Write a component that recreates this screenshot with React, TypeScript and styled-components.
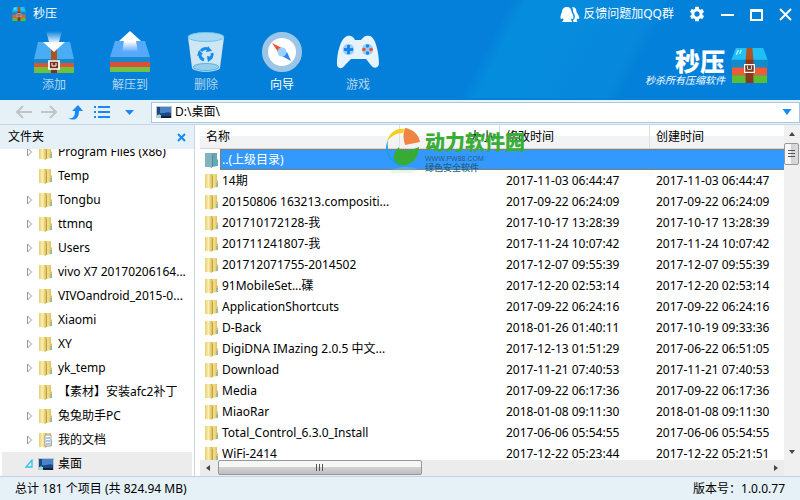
import React from "react";
import styled, { createGlobalStyle, css } from "styled-components";
import { MdSettings } from "react-icons/md";

const GlobalStyle = createGlobalStyle`
  * { box-sizing: border-box; }
  html, body, #root { height: 100%; margin: 0; }
  body {
    overflow: hidden;
    color: #000;
    font: 12px/16px "Noto Sans", "Noto Sans CJK SC", sans-serif;
  }
  button, input { font: inherit; color: inherit; }
  svg { display: block; flex: none; }
`;

const bare = css`
  border: 0;
  padding: 0;
  background: none;
`;

const Window = styled.main`
  display: flex;
  flex-direction: column;
  height: 100vh;
  background: #fff;
`;

const Banner = styled.header`
  display: flex;
  flex-direction: column;
  flex: none;
  color: #fff;
  background: linear-gradient(118deg, #0480da 0 60%, #058ddd 62%, #0788dc 77%, #0380d9 79%);
`;

const TitleBar = styled.div`
  display: flex;
  align-items: center;
  flex: none;
  height: 28px;
  padding: 0 7px 0 12px;
`;

const AppName = styled.h1`
  flex: 1;
  margin: 0 0 0 7px;
  font-size: 12px;
  font-weight: 400;
`;

const Feedback = styled.a`
  display: flex;
  align-items: center;
  gap: 3px;
  margin-right: 14px;
  color: #fff;
  text-decoration: none;
`;

const TitleButtons = styled.div`
  display: flex;
  align-items: center;
  gap: 14px;
`;

const IconButton = styled.button`
  ${bare}
  display: flex;
  align-items: center;
  justify-content: center;
  color: inherit;
`;

const Actions = styled.div`
  display: flex;
  height: 70px;
  justify-content: space-between;
  padding: 0 32px 0 16px;
`;

const ActionGroup = styled.nav`
  display: flex;
`;

const Action = styled.button<{ $active?: boolean }>`
  ${bare}
  display: flex;
  flex-direction: column;
  align-items: center;
  width: 76px;
  height: 66px;
  gap: 1px;
  color: ${(p) => (p.$active ? "#fff" : "#b5d5ee")};
`;

const Brand = styled.div`
  display: flex;
  align-items: center;
  gap: 6px;
  padding-top: 5px;
`;

const BrandText = styled.div`
  display: flex;
  flex-direction: column;
  align-items: flex-end;
`;

const BrandName = styled.strong`
  font: 900 25px/28px "Noto Sans CJK SC", sans-serif;
`;

const Slogan = styled.em`
  font: italic 10px/12px "Noto Sans CJK SC", sans-serif;
`;

const Toolbar = styled.div`
  display: flex;
  align-items: center;
  flex: none;
  height: 27px;
  padding-left: 15px;
  border-top: 2px solid #0380d9;
  border-bottom: 1px solid #c8d6ea;
  background: #e5f1f7;
`;

const NavButtons = styled.div`
  display: flex;
  align-items: center;
  gap: 9px;
  width: 136px;
`;

const AddressBar = styled.label`
  display: flex;
  flex: 1;
  align-items: center;
  gap: 3px;
  height: 21px;
  padding: 0 6px 0 4px;
  border: 1px solid #a8c9dd;
  background: #fff;
`;

const Address = styled.input`
  ${bare}
  flex: 1;
  min-width: 0;
  outline: 0;
`;

const Content = styled.div`
  display: flex;
  flex: 1;
  min-height: 0;
`;

const Sidebar = styled.aside`
  display: flex;
  flex-direction: column;
  flex: none;
  width: 195px;
  border-right: 1px solid #ccd5e7;
`;

const SidebarHeader = styled.div`
  display: flex;
  align-items: center;
  justify-content: space-between;
  flex: none;
  height: 24px;
  padding: 0 8px;
  background: #e5f1f7;
`;

const PanelTitle = styled.h2`
  margin: 0;
  font-size: 12px;
  font-weight: 400;
`;

const TreeView = styled.div`
  display: flex;
  flex: 1;
  flex-direction: column;
  justify-content: flex-end;
  min-height: 0;
  overflow: hidden;
  padding: 0 2px;
`;

const Tree = styled.ul`
  margin: 0;
  padding: 0;
  list-style: none;
`;

const TreeRow = styled.li<{ $selected?: boolean }>`
  display: grid;
  grid-template-columns: 14px 20px 1fr;
  align-items: center;
  height: 24px;
  padding-left: 22px;
  white-space: nowrap;
  background: ${(p) => (p.$selected ? "#ececec" : "transparent")};
`;

const ListPane = styled.section`
  display: grid;
  flex: 1;
  grid-template-columns: 1fr 16px;
  grid-template-rows: 1fr 16px;
  min-width: 0;
  padding-left: 5px;
  position: relative;
`;

const TableView = styled.div`
  min-height: 0;
  overflow: hidden;
`;

const Table = styled.table`
  width: 100%;
  table-layout: fixed;
  border-collapse: separate;
  border-spacing: 0;
`;

const Column = styled.col<{ $width?: number }>`
  width: ${(p) => (p.$width ? `${p.$width}px` : "auto")};
`;

const HeadCell = styled.th<{ $end?: boolean }>`
  height: 24px;
  padding: 0 6px;
  border-right: 1px solid #dfe0e4;
  border-bottom: 1px solid #d5d5d5;
  background: linear-gradient(#fff 45%, #f2f3f5 50%);
  font-weight: 400;
  text-align: ${(p) => (p.$end ? "right" : "left")};
  &:last-child { border-right: 0; }
`;

const Cell = styled.td<{ $selected?: boolean }>`
  height: 21px;
  padding: 0 6px;
  white-space: nowrap;
  ${(p) =>
    p.$selected &&
    css`
      background: #3399ff;
      border-top: 1px dotted #cc6600;
      border-bottom: 1px dotted #cc6600;
    `}
`;

const NameCell = styled.td`
  height: 21px;
  padding: 0;
`;

const NameContent = styled.div`
  display: flex;
  align-items: center;
  gap: 2px;
  padding-left: 4px;
`;

const FileName = styled.span<{ $selected?: boolean }>`
  flex: 1;
  height: 21px;
  padding-left: 2px;
  line-height: 21px;
  white-space: nowrap;
  ${(p) =>
    p.$selected &&
    css`
      color: #fff;
      background: #3399ff;
      border: 1px dotted #cc6600;
      border-right: 0;
      padding-left: 1px;
      line-height: 19px;
    `}
`;

const VerticalBar = styled.div`
  display: flex;
  flex-direction: column;
  padding-top: 1px;
  background: #f0f0f0;
`;

const HorizontalBar = styled.div`
  display: flex;
  background: #ececec;
`;

const ScrollArrow = styled(IconButton)<{ $end?: boolean }>`
  flex: none;
  width: 16px;
  height: 16px;
  ${(p) => p.$end && css`margin: auto 0 0 auto;`}
`;

const Thumb = styled.button<{ $vertical?: boolean }>`
  ${bare}
  display: flex;
  align-items: center;
  justify-content: center;
  border: 1px solid #979797;
  border-radius: 2px;
  ${(p) =>
    p.$vertical
      ? css`
          width: 15px;
          height: 22px;
          margin-top: 1px;
          background: linear-gradient(90deg, #f6f6f6 45%, #d2d2d5 50%, #dcdcde);
        `
      : css`
          width: 35%;
          margin: 0 2px;
          height: 15px;
          background: linear-gradient(#f6f6f6 45%, #d2d2d5 50%, #bebec2);
        `}
`;

const Corner = styled.div`
  background: #f0f0f0;
`;

const Watermark = styled.div`
  position: absolute;
  top: 2px;
  left: 190px;
  display: flex;
  gap: 4px;
  pointer-events: none;
`;

const WatermarkText = styled.div`
  display: flex;
  flex-direction: column;
  padding-top: 3px;
  color: #285f80;
`;

const WatermarkName = styled.strong`
  color: #39ad36;
  font: 900 20px/24px "Noto Sans CJK SC", sans-serif;
`;

const WatermarkUrl = styled.span`
  font: 7px/9px "Liberation Sans", sans-serif;
`;

const WatermarkTag = styled.span`
  font: 500 9px/9px "Noto Sans CJK SC", sans-serif;
`;

const StatusBar = styled.footer`
  display: flex;
  align-items: center;
  justify-content: space-between;
  flex: none;
  height: 24px;
  padding: 0 15px;
  border-top: 1px solid #c6cde4;
  background: #e5f1f7;
`;

function Archive({ width, height }: { width: number; height: number }) {
  return (
    <svg width={width} height={height} viewBox="0 0 38 36" preserveAspectRatio="none" aria-hidden="true">
      <path d="M5 0h28l5 13H0z" fill="#1fc0f5" />
      <path d="M0 12h38v8H0z" fill="#118bc9" />
      <path d="M1 20h36v8H1z" fill="#f15a36" />
      <path d="M1 28h36v8H1z" fill="#5cbd31" />
      <path d="M16 0h6l1 13h-8z" fill="#b5521f" />
      <path d="M15 12h8v24h-8z" fill="#87381f" />
      <path d="M14 17h10v8H14z" fill="#713521" stroke="#fff" strokeWidth="1.3" />
      <path d="M17 18v4h4v-4" fill="none" stroke="#e8d8ce" />
      <path d="M7.500 2 5.500 7M10.500 2 9 6" stroke="#b8f2ff" strokeWidth="1.4" />
    </svg>
  );
}

function AddIcon() {
  return (
    <svg width="44" height="48" viewBox="0 0 44 48" aria-hidden="true">
      <defs>
        <linearGradient id="fall" x2="0" y2="1">
          <stop stopColor="#fff" stopOpacity="0" />
          <stop offset=".6" stopColor="#fff" />
        </linearGradient>
      </defs>
      <path d="M6 14h32l4 17H2z" fill="#48adf3" />
      <path d="M2 31h40v5H2z" fill="#118bc9" />
      <path d="M2 35h40v5H2z" fill="#db5437" />
      <path d="M2 39h40v6H2z" fill="#72bf3c" />
      <path d="M19 21h6v24h-6z" fill="#a9551f" />
      <path d="M19 32h6v13h-6z" fill="#7b3521" />
      <path d="M17 33h10v8H17z" fill="#723321" stroke="#fff" strokeWidth="1.7" />
      <path d="M20 35v3h4v-3" fill="none" stroke="#fff" />
      <path d="M14 3h16l-3 11h6L22 24 11 14h6z" fill="url(#fall)" />
    </svg>
  );
}

function ExtractIcon() {
  return (
    <svg width="44" height="48" viewBox="0 0 44 48" aria-hidden="true">
      <defs>
        <linearGradient id="rise" x2="0" y2="1">
          <stop offset=".5" stopColor="#fff" />
          <stop offset="1" stopColor="#fff" stopOpacity="0" />
        </linearGradient>
      </defs>
      <path d="M7 13h30l5 16H2z" fill="#56a8fb" />
      <path d="M2 29h40v6H2z" fill="#1689d1" />
      <path d="M2 34h40v5H2z" fill="#db5035" />
      <path d="M2 39h40v5H2z" fill="#72c247" />
      <path d="M22 3 33 13h-5l2 11H14l2-11h-5z" fill="url(#rise)" />
    </svg>
  );
}

function TrashIcon() {
  return (
    <svg width="44" height="48" viewBox="0 0 44 48" aria-hidden="true">
      <path d="M4 9h36l-4 31c-3 5-25 5-28 0z" fill="#cfe6f5" />
      <ellipse cx="22" cy="39" rx="13" ry="3.500" fill="#94d0ee" stroke="#5fb4e0" />
      <ellipse cx="22" cy="9" rx="18" ry="4.500" fill="#a8daf3" stroke="#72c4eb" />
      <g fill="none" stroke="#158dec" strokeWidth="3">
        <path d="M17 23a6 6 0 0 1 7-2M28 25a6 6 0 0 1-4 7M20 32a6 6 0 0 1-4-6" />
      </g>
      <g fill="#158dec"><path d="m24 18 4 5-6 1zM29 29l-5 5-1-6zM13 28l2-6 4 4z" /></g>
    </svg>
  );
}

function CompassIcon() {
  return (
    <svg width="44" height="48" viewBox="0 0 44 48" aria-hidden="true">
      <circle cx="22" cy="24" r="17" fill="#fff" stroke="#9cc6e8" strokeWidth="6" />
      <path d="m12 15 10 5-4 4z" fill="#f05534" />
      <path d="m31 33-9-5 5-4z" fill="#2985f3" />
      <circle cx="22" cy="24" r="4.500" fill="#98d2fc" />
    </svg>
  );
}

function GameIcon() {
  return (
    <svg width="44" height="48" viewBox="0 0 44 48" aria-hidden="true">
      <path d="M11 8c5-1 7 2 8 4h6c3-4 5-5 9-4 6 2 9 18 9 27 0 6-6 6-9 1l-4-5H15l-5 5c-4 6-9 5-9 0C1 26 4 11 11 8z" fill="#e6f3fc" />
      <circle cx="12.500" cy="21.500" r="5.700" fill="#99cff3" />
      <path d="M12.500 17v9M8 21.500h9" stroke="#1685ef" strokeWidth="3" />
      <circle cx="31.500" cy="21.500" r="5.700" fill="#99cff3" />
      <circle cx="31.500" cy="18" r="1.800" fill="#1685ef" />
      <circle cx="31.500" cy="25" r="1.800" fill="#1685ef" />
      <circle cx="28" cy="21.500" r="1.800" fill="#ee5235" />
      <circle cx="35" cy="21.500" r="1.800" fill="#ee5235" />
    </svg>
  );
}

function Folder({ tint, paper }: { tint?: boolean; paper?: boolean }) {
  return (
    <svg width="14" height="16" viewBox="0 0 14 16" aria-hidden="true">
      <defs>
        <linearGradient id="folderFront">
          <stop stopColor="#e6cd72" />
          <stop offset=".5" stopColor="#faefb0" />
          <stop offset="1" stopColor="#dcbd57" />
        </linearGradient>
        <linearGradient id="folderBack">
          <stop stopColor="#c5a03e" />
          <stop offset=".4" stopColor="#f3e292" />
          <stop offset="1" stopColor="#d9b74e" />
        </linearGradient>
      </defs>
      <path d="M7 1h6v6l1 1v6l-7 1z" fill={tint ? "#6aa6b6" : "url(#folderBack)"} />
      <path d="M1 1h6l1 1v14l-3-1H1z" fill={tint ? "#7fb4bf" : "url(#folderFront)"} />
      <path d="M8.500 3v12" stroke={tint ? "#4f8ba0" : "#c4a244"} />
      <path d="M13 10v4" stroke="#4fb0ee" />
      {paper && <path d="M7 3h6v11H7z" fill="#fff" stroke="#a1a09a" />}
      {paper && <path d="M8 6h4M8 9h4M8 12h4" stroke="#4e91da" />}
    </svg>
  );
}

function Desktop() {
  return (
    <svg width="16" height="14" viewBox="0 0 16 14" aria-hidden="true">
      <path d="M0 1h16v12H0z" fill="#b9c5d2" />
      <path d="M1 2h14v10H1z" fill="#1c4787" />
      <path d="M4 2h11v6C11 6 9 9 4 8z" fill="#4a84c6" />
      <path d="M1 12h14" stroke="#142036" strokeWidth="2" />
      <path d="M1 10h4v3H1z" fill="#7ce1ed" />
      <path d="M3 9v3" stroke="#e7c754" />
    </svg>
  );
}

function Expander({ open }: { open?: boolean }) {
  return (
    <svg width="10" height="10" viewBox="0 0 10 10" aria-hidden="true">
      {open ? (
        <path d="M8 1v7H2z" fill="#dff7ff" stroke="#34c0f2" strokeWidth="1.300" />
      ) : (
        <path d="m3.500 1 4 4-4 4z" fill="#fff" stroke="#9a9a9a" />
      )}
    </svg>
  );
}

function Triangle({ turn = 0, color = "#444", size = 8 }: { turn?: number; color?: string; size?: number }) {
  return (
    <svg width={size} height={size} viewBox="0 0 8 8" aria-hidden="true">
      <path d="M1 2h6L4 6z" fill={color} transform={`rotate(${turn} 4 4)`} />
    </svg>
  );
}

function Grip({ vertical }: { vertical?: boolean }) {
  return (
    <svg width="8" height="8" viewBox="0 0 8 8" aria-hidden="true">
      <path d={vertical ? "M0 .5h7M0 3.500h7M0 6.500h7" : "M.5 0v7M3.500 0v7M6.500 0v7"} stroke="#555" />
    </svg>
  );
}

function Penguins() {
  return (
    <svg width="20" height="17" viewBox="0 0 20 17" fill="#fff" aria-hidden="true">
      <path d="M7 1c3 0 4.500 2 4.500 5 2 3 2.500 6 1.500 7l-1.500-.5-.5 1.500 1.500 2H2l1.500-2L3 12.500 1 13c-1-1-.5-4 1-7 0-3 2-5 5-5z" />
      <path d="M12 1c4 0 4.500 3 4.500 5 2 3 3.500 6 2.500 7l-1.500-.5-1 1.500 1 2h-4l-.5-2c3-1 2-6 0-8 0-2 0-3-1-5z" />
    </svg>
  );
}

const actions = [
  { label: "添加", icon: <AddIcon /> },
  { label: "解压到", icon: <ExtractIcon /> },
  { label: "删除", icon: <TrashIcon /> },
  { label: "向导", icon: <CompassIcon />, active: true },
  { label: "游戏", icon: <GameIcon /> },
];

const folders = [
  { name: "Program Files (x86)", children: true },
  { name: "Temp", children: false },
  { name: "Tongbu", children: true },
  { name: "ttmnq", children: true },
  { name: "Users", children: true },
  { name: "vivo X7 20170206164...", children: true },
  { name: "VIVOandroid_2015-0...", children: true },
  { name: "Xiaomi", children: true },
  { name: "XY", children: true },
  { name: "yk_temp", children: true },
  { name: "【素材】安装afc2补丁", children: false },
  { name: "兔兔助手PC", children: true },
  { name: "我的文档", children: true, paper: true },
];

const files = [
  ["14期", "2017-11-03 06:44:47", "2017-11-03 06:44:47"],
  ["20150806 163213.compositi...", "2017-09-22 06:24:09", "2017-09-22 06:24:09"],
  ["201710172128-我", "2017-10-17 13:28:39", "2017-10-17 13:28:39"],
  ["201711241807-我", "2017-11-24 10:07:42", "2017-11-24 10:07:42"],
  ["201712071755-2014502", "2017-12-07 09:55:39", "2017-12-07 09:55:39"],
  ["91MobileSet...礏", "2017-12-20 02:53:14", "2017-12-20 02:53:14"],
  ["ApplicationShortcuts", "2017-09-22 06:24:16", "2017-09-22 06:24:16"],
  ["D-Back", "2018-01-26 01:40:11", "2017-10-19 09:33:36"],
  ["DigiDNA IMazing 2.0.5 中文...", "2017-12-13 01:51:29", "2017-06-22 06:51:05"],
  ["Download", "2017-11-21 07:40:53", "2017-11-21 07:40:53"],
  ["Media", "2017-09-22 06:17:36", "2017-09-22 06:17:36"],
  ["MiaoRar", "2018-01-08 09:11:30", "2018-01-08 09:11:30"],
  ["Total_Control_6.3.0_Install", "2017-06-06 05:54:55", "2017-06-06 05:54:55"],
  ["WiFi-2414", "2017-12-22 05:23:44", "2017-12-22 05:21:51"],
];

export default function App() {
  return (
    <Window>
      <GlobalStyle />
      <Banner>
        <TitleBar>
          <Archive width={14} height={14} />
          <AppName>秒压</AppName>
          <Feedback href="#feedback"><Penguins />反馈问题加QQ群</Feedback>
          <TitleButtons>
            <IconButton aria-label="设置"><MdSettings size={18} /></IconButton>
            <IconButton aria-label="最小化">
              <svg width="15" height="15"><path d="M1 8h13" stroke="#fff" strokeWidth="2" /></svg>
            </IconButton>
            <IconButton aria-label="最大化">
              <svg width="15" height="15"><path d="M2 3h11v10H2z" fill="none" stroke="#fff" strokeWidth="2" /><path d="M1 3.500h13" stroke="#fff" strokeWidth="3" /></svg>
            </IconButton>
            <IconButton aria-label="关闭">
              <svg width="15" height="15"><path d="m2 2 11 11M13 2 2 13" stroke="#fff" strokeWidth="2" /></svg>
            </IconButton>
          </TitleButtons>
        </TitleBar>
        <Actions>
          <ActionGroup>
            {actions.map((a) => (
              <Action key={a.label} $active={a.active}>{a.icon}{a.label}</Action>
            ))}
          </ActionGroup>
          <Brand>
            <BrandText>
              <BrandName>秒压</BrandName>
              <Slogan>秒杀所有压缩软件</Slogan>
            </BrandText>
            <Archive width={37} height={35} />
          </Brand>
        </Actions>
      </Banner>

      <Toolbar>
        <NavButtons>
          <IconButton aria-label="后退">
            <svg width="17" height="14"><path d="M17 7H2M8 1 2 7l6 6" fill="none" stroke="#c2c5c7" strokeWidth="2" /></svg>
          </IconButton>
          <IconButton aria-label="前进">
            <svg width="17" height="14"><path d="M0 7h15M9 1l6 6-6 6" fill="none" stroke="#c2c5c7" strokeWidth="2" /></svg>
          </IconButton>
          <IconButton aria-label="上一级">
            <svg width="17" height="15"><path d="M1 13c5 1 7-1 7-7H5l6-6 5 6h-4c0 7-4 11-11 7z" fill="#1689f8" /></svg>
          </IconButton>
          <IconButton aria-label="视图">
            <svg width="17" height="14"><path d="M1 2h2M5 2h12M1 7h2M5 7h12M1 12h2M5 12h12" stroke="#1689f8" strokeWidth="2" /></svg>
          </IconButton>
          <IconButton aria-label="视图选项">
            <svg width="19" height="12"><path d="M6 4h9l-4.500 5z" fill="#1689f8" /></svg>
          </IconButton>
        </NavButtons>
        <AddressBar>
          <Desktop />
          <Address aria-label="路径" defaultValue={"D:\\桌面\\"} />
          <Triangle color="#1689f8" size={12} />
        </AddressBar>
      </Toolbar>

      <Content>
        <Sidebar>
          <SidebarHeader>
            <PanelTitle>文件夹</PanelTitle>
            <IconButton aria-label="关闭文件夹面板">
              <svg width="9" height="9"><path d="m1 1 7 7M8 1 1 8" stroke="#1689f8" strokeWidth="2" /></svg>
            </IconButton>
          </SidebarHeader>
          <TreeView>
            <Tree>
              {folders.map((f) => (
                <TreeRow key={f.name}>
                  {f.children ? <Expander /> : <span />}
                  <Folder paper={f.paper} />
                  <span>{f.name}</span>
                </TreeRow>
              ))}
              <TreeRow $selected><Expander open /><Desktop /><span>桌面</span></TreeRow>
            </Tree>
          </TreeView>
        </Sidebar>

        <ListPane>
          <TableView>
            <Table>
              <colgroup>
                <Column $width={200} /><Column $width={100} /><Column $width={150} /><Column />
              </colgroup>
              <thead>
                <tr>
                  <HeadCell>名称</HeadCell>
                  <HeadCell $end>大小</HeadCell>
                  <HeadCell>修改时间</HeadCell>
                  <HeadCell>创建时间</HeadCell>
                </tr>
              </thead>
              <tbody>
                <tr>
                  <NameCell>
                    <NameContent><Folder tint /><FileName $selected>..(上级目录)</FileName></NameContent>
                  </NameCell>
                  <Cell $selected /><Cell $selected /><Cell $selected />
                </tr>
                {files.map(([name, modified, created]) => (
                  <tr key={name}>
                    <NameCell><NameContent><Folder /><FileName>{name}</FileName></NameContent></NameCell>
                    <Cell />
                    <Cell>{modified}</Cell>
                    <Cell>{created}</Cell>
                  </tr>
                ))}
              </tbody>
            </Table>
          </TableView>
          <VerticalBar>
            <ScrollArrow aria-label="向上滚动"><Triangle turn={180} /></ScrollArrow>
            <Thumb $vertical aria-label="垂直滚动"><Grip vertical /></Thumb>
            <ScrollArrow $end aria-label="向下滚动"><Triangle /></ScrollArrow>
          </VerticalBar>
          <HorizontalBar>
            <ScrollArrow aria-label="向左滚动"><Triangle turn={90} /></ScrollArrow>
            <Thumb aria-label="水平滚动"><Grip /></Thumb>
            <ScrollArrow $end aria-label="向右滚动"><Triangle turn={270} /></ScrollArrow>
          </HorizontalBar>
          <Corner />
          <Watermark>
            <svg width="36" height="46" viewBox="0 0 36 46" aria-hidden="true">
              <path d="M3 13C-2 23 3 35 16 39c-7-7-6-12-2-18-5 3-6 8-6 12C3 27 2 20 3 13z" fill="#1a9de5" />
              <path d="M2 14C5 5 12 1 19 2l-1 4C11 6 7 9 2 14z" fill="#f8cf1b" />
              <path d="M20 1c8 1 14 7 15 14l-15 3c-2-7-2-12 0-17z" fill="#ee8542" />
              <path d="M34 20c0 13-10 20-19 18-9-4-7-12-1-18-1 4 10 5 20 0z" fill="#36ac35" />
              <path d="M5 45c3-5 22-7 28-2-5 4-23 5-28 2z" fill="#a7d8b8" opacity=".25" />
            </svg>
            <WatermarkText>
              <WatermarkName>动力软件园</WatermarkName>
              <WatermarkUrl>WWW.PW88.COM</WatermarkUrl>
              <WatermarkTag>绿色安全软件</WatermarkTag>
            </WatermarkText>
          </Watermark>
        </ListPane>
      </Content>

      <StatusBar>
        <span>总计 181 个项目 (共 824.94 MB)</span>
        <span>版本号：1.0.0.77</span>
      </StatusBar>
    </Window>
  );
}
